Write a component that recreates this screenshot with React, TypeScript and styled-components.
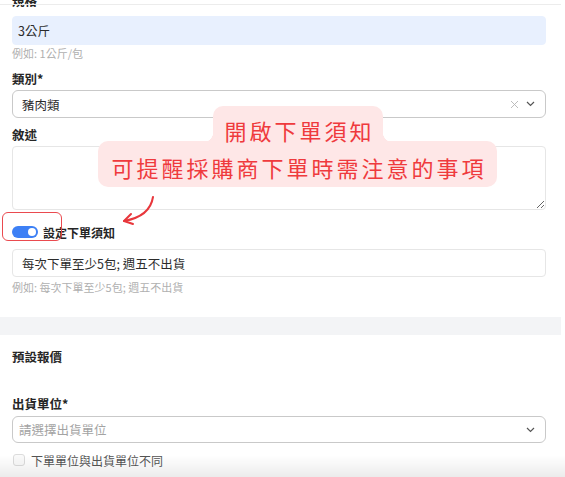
import React from "react";
import styled, { createGlobalStyle } from "styled-components";

const GlobalStyle = createGlobalStyle`
  html, body { margin: 0; padding: 0; background: #ffffff; }
  body {
    font-family: "Noto Sans CJK TC", "Noto Sans", sans-serif;
    color: #333;
    overflow: hidden;
  }
  * { box-sizing: border-box; }
`;

const Page = styled.div`
  position: relative;
  width: 561px;
  background: #fff;
`;

const Section = styled.div<{ $top?: number; $bottom?: number }>`
  display: flex;
  flex-direction: column;
  padding: 0 15px ${(p) => p.$bottom ?? 0}px 12px;
  margin-top: ${(p) => p.$top ?? 0}px;
`;

const Label = styled.div<{ $mt?: number; $mb?: number }>`
  font-size: 12.5px;
  font-weight: 700;
  line-height: 18px;
  color: #262626;
  margin-top: ${(p) => p.$mt ?? 0}px;
  margin-bottom: ${(p) => p.$mb ?? 0}px;
`;

const Input = styled.div<{ $filled?: boolean; $h?: number; $mt?: number }>`
  display: flex;
  align-items: center;
  height: ${(p) => p.$h ?? 28}px;
  margin-top: ${(p) => p.$mt ?? 0}px;
  padding: 0 ${(p) => (p.$filled ? 5 : 9)}px;
  font-size: 12.5px;
  color: #2b2b2b;
  border-radius: 4px;
  background: ${(p) => (p.$filled ? "#e8f0fe" : "#fff")};
  border: 1px solid ${(p) => (p.$filled ? "#e8f0fe" : "#e6e6e6")};
`;

const SelectBox = styled.div<{ $h?: number }>`
  display: flex;
  align-items: center;
  height: ${(p) => p.$h ?? 28}px;
  padding: 0 10px 0 9px;
  border: 1px solid #c9c9c9;
  border-radius: 6px;
  font-size: 12.5px;
  color: #2b2b2b;
`;

const SelectValue = styled.span<{ $placeholder?: boolean }>`
  flex: 1;
  color: ${(p) => (p.$placeholder ? "#a3a3a3" : "#2b2b2b")};
  margin-left: ${(p) => (p.$placeholder ? -3 : 0)}px;
`;

const IconGroup = styled.span`
  display: flex;
  align-items: center;
  gap: 7px;
`;

const Hint = styled.div<{ $mt?: number }>`
  font-size: 11px;
  line-height: 16px;
  color: #b0b0b0;
  margin-top: ${(p) => p.$mt ?? 0}px;
`;

const TextArea = styled.textarea`
  display: block;
  width: 100%;
  height: 64px;
  border: 1px solid #e6e6e6;
  border-radius: 4px;
  resize: vertical;
  outline: none;
  font-family: inherit;
  background: #fff;
`;

const ToggleRow = styled.div`
  display: flex;
  align-items: center;
  gap: 5px;
  height: 18px;
  margin-top: 13px;
`;

const Toggle = styled.span`
  position: relative;
  display: inline-block;
  width: 26px;
  height: 12px;
  border-radius: 6px;
  background: #3d80f5;
  &::after {
    content: "";
    position: absolute;
    right: 2px;
    top: 2px;
    width: 8px;
    height: 8px;
    border-radius: 50%;
    background: #fff;
  }
`;

const ToggleLabel = styled.span`
  font-size: 12px;
  font-weight: 700;
  color: #262626;
`;

const Band = styled.div`
  height: 18px;
  background: #f3f4f6;
`;

const CheckRow = styled.div`
  display: flex;
  align-items: center;
  gap: 6px;
  height: 16px;
  margin-top: 9px;
  padding-left: 1px;
  font-size: 12px;
  color: #555;
`;

const CheckBox = styled.span`
  width: 12px;
  height: 12px;
  border: 1px solid #dcdcdc;
  border-radius: 3px;
  background: #fafafa;
`;

const TopRule = styled.div`
  position: fixed;
  left: 0;
  top: 4px;
  width: 561px;
  height: 1px;
  background: #ececec;
  pointer-events: none;
`;

const BottomShade = styled.div`
  position: fixed;
  left: 0;
  right: 0;
  bottom: 0;
  height: 22px;
  background: linear-gradient(to bottom, rgba(0, 0, 0, 0), rgba(0, 0, 0, 0.075));
  pointer-events: none;
`;

const CalloutTop = styled.div`
  position: absolute;
  left: 213px;
  top: 114px;
  width: 170px;
  height: 36px;
  background: #fee7e7;
  border-radius: 10px 10px 0 0;
  display: flex;
  justify-content: center;
  padding-top: 11px;
  font-size: 22px;
  line-height: 26px;
  letter-spacing: 3px;
  text-indent: 3px;
  color: #ef3a3d;
  z-index: 2;
  &::before,
  &::after {
    content: "";
    position: absolute;
    bottom: 0;
    width: 10px;
    height: 10px;
  }
  &::before {
    left: -10px;
    background: radial-gradient(circle at 0 0, transparent 10px, #fee7e7 10.5px);
  }
  &::after {
    right: -10px;
    background: radial-gradient(circle at 100% 0, transparent 10px, #fee7e7 10.5px);
  }
`;

const CalloutBottom = styled.div`
  position: absolute;
  left: 98px;
  top: 149px;
  width: 399px;
  height: 46px;
  background: #fee7e7;
  border-radius: 10px;
  display: flex;
  justify-content: center;
  padding-top: 13px;
  font-size: 22px;
  line-height: 26px;
  letter-spacing: 3px;
  text-indent: 3px;
  color: #ef3a3d;
  z-index: 1;
`;

const Highlight = styled.div`
  position: absolute;
  left: 2px;
  top: 220px;
  width: 60px;
  height: 29px;
  border: 1px solid #ea4a4f;
  border-radius: 6px;
  pointer-events: none;
`;

const ArrowSvg = styled.svg`
  position: absolute;
  left: 115px;
  top: 198px;
  overflow: visible;
`;

const Chevron = () => (
  <svg width="9" height="6" viewBox="0 0 9 6">
    <path d="M1 1 L4.5 4.5 L8 1" fill="none" stroke="#555" strokeWidth="1.2" />
  </svg>
);

const Cross = () => (
  <svg width="9" height="9" viewBox="0 0 9 9">
    <path d="M1 1 L8 8 M8 1 L1 8" fill="none" stroke="#b5b5b5" strokeWidth="0.9" />
  </svg>
);

export default function App() {
  return (
    <>
      <GlobalStyle />
      <Page>
        <Section $top={-8} $bottom={22}>
          <Label $mb={6}>規格</Label>
          <Input $filled $h={29}>3公斤</Input>
          <Hint>例如: 1公斤/包</Hint>

          <Label $mt={9} $mb={2}>類別*</Label>
          <SelectBox>
            <SelectValue>豬肉類</SelectValue>
            <IconGroup>
              <Cross />
              <Chevron />
            </IconGroup>
          </SelectBox>

          <Label $mt={8} $mb={2}>敘述</Label>
          <TextArea />

          <ToggleRow>
            <Toggle />
            <ToggleLabel>設定下單須知</ToggleLabel>
          </ToggleRow>

          <Input $mt={8}>每次下單至少5包; 週五不出貨</Input>
          <Hint $mt={2}>例如: 每次下單至少5包; 週五不出貨</Hint>
        </Section>

        <Band />

        <Section>
          <Label $mt={13}>預設報價</Label>
          <Label $mt={29} $mb={3}>出貨單位*</Label>
          <SelectBox $h={27}>
            <SelectValue $placeholder>請選擇出貨單位</SelectValue>
            <Chevron />
          </SelectBox>
          <CheckRow>
            <CheckBox />
            下單單位與出貨單位不同
          </CheckRow>
        </Section>

        <CalloutTop>開啟下單須知</CalloutTop>
        <CalloutBottom>可提醒採購商下單時需注意的事項</CalloutBottom>
        <Highlight />
        <ArrowSvg width="45" height="40" viewBox="0 0 45 40">
          <path
            d="M38 7 C36 20 26 28 9 31"
            fill="none"
            stroke="#e8373c"
            strokeWidth="2"
            strokeLinecap="round"
          />
          <path
            d="M16 24 L9 31 L18 34"
            fill="none"
            stroke="#e8373c"
            strokeWidth="2"
            strokeLinecap="round"
            strokeLinejoin="round"
          />
        </ArrowSvg>
      </Page>
      <TopRule />
      <BottomShade />
    </>
  );
}
